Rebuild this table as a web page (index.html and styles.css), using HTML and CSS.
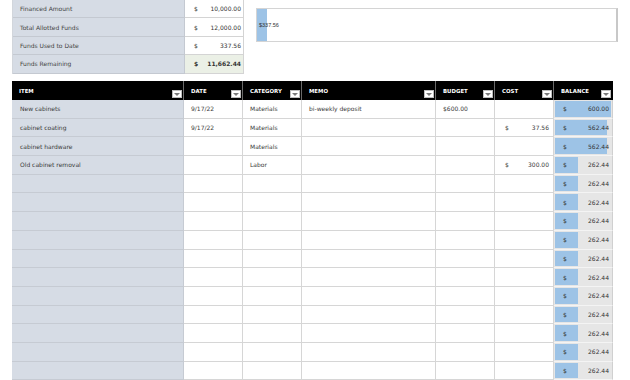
FILE: index.html
```html
<!DOCTYPE html>
<html>
<head>
<meta charset="utf-8">
<link rel="stylesheet" href="styles.css">
</head>
<body>
<div class="sheet">
  <div class="top">
    <div class="summary">
      <div class="lbl">Financed Amount</div><div class="val"><span>$</span><span>10,000.00</span></div>
      <div class="lbl">Total Allotted Funds</div><div class="val"><span>$</span><span>12,000.00</span></div>
      <div class="lbl">Funds Used to Date</div><div class="val"><span>$</span><span>337.56</span></div>
      <div class="lbl">Funds Remaining</div><div class="val rem"><span>$</span><span>11,662.44</span></div>
    </div>
    <div class="chart">
      <div class="chart-bar"></div>
      <span class="chart-label">$337.56</span>
    </div>
  </div>

  <div class="grid">
    <div class="th">ITEM<span class="flt"></span></div>
    <div class="th">DATE<span class="flt"></span></div>
    <div class="th">CATEGORY<span class="flt"></span></div>
    <div class="th">MEMO<span class="flt"></span></div>
    <div class="th">BUDGET<span class="flt"></span></div>
    <div class="th">COST<span class="flt"></span></div>
    <div class="th last">BALANCE<span class="flt"></span></div>

    <div class="c item">New cabinets</div><div class="c">9/17/22</div><div class="c">Materials</div><div class="c">bi-weekly deposit</div><div class="c">$600.00</div><div class="c"></div><div class="c bal" style="--w:100%"><span>$</span><span>600.00</span></div>
    <div class="c item">cabinet coating</div><div class="c">9/17/22</div><div class="c">Materials</div><div class="c"></div><div class="c"></div><div class="c cost"><span>$</span><span>37.56</span></div><div class="c bal" style="--w:93.7%"><span>$</span><span>562.44</span></div>
    <div class="c item">cabinet hardware</div><div class="c"></div><div class="c">Materials</div><div class="c"></div><div class="c"></div><div class="c"></div><div class="c bal" style="--w:93.7%"><span>$</span><span>562.44</span></div>
    <div class="c item">Old cabinet removal</div><div class="c"></div><div class="c">Labor</div><div class="c"></div><div class="c"></div><div class="c cost"><span>$</span><span>300.00</span></div><div class="c bal" style="--w:43.7%"><span>$</span><span>262.44</span></div>
    <div class="c item"></div><div class="c"></div><div class="c"></div><div class="c"></div><div class="c"></div><div class="c"></div><div class="c bal" style="--w:43.7%"><span>$</span><span>262.44</span></div>
    <div class="c item"></div><div class="c"></div><div class="c"></div><div class="c"></div><div class="c"></div><div class="c"></div><div class="c bal" style="--w:43.7%"><span>$</span><span>262.44</span></div>
    <div class="c item"></div><div class="c"></div><div class="c"></div><div class="c"></div><div class="c"></div><div class="c"></div><div class="c bal" style="--w:43.7%"><span>$</span><span>262.44</span></div>
    <div class="c item"></div><div class="c"></div><div class="c"></div><div class="c"></div><div class="c"></div><div class="c"></div><div class="c bal" style="--w:43.7%"><span>$</span><span>262.44</span></div>
    <div class="c item"></div><div class="c"></div><div class="c"></div><div class="c"></div><div class="c"></div><div class="c"></div><div class="c bal" style="--w:43.7%"><span>$</span><span>262.44</span></div>
    <div class="c item"></div><div class="c"></div><div class="c"></div><div class="c"></div><div class="c"></div><div class="c"></div><div class="c bal" style="--w:43.7%"><span>$</span><span>262.44</span></div>
    <div class="c item"></div><div class="c"></div><div class="c"></div><div class="c"></div><div class="c"></div><div class="c"></div><div class="c bal" style="--w:43.7%"><span>$</span><span>262.44</span></div>
    <div class="c item"></div><div class="c"></div><div class="c"></div><div class="c"></div><div class="c"></div><div class="c"></div><div class="c bal" style="--w:43.7%"><span>$</span><span>262.44</span></div>
    <div class="c item"></div><div class="c"></div><div class="c"></div><div class="c"></div><div class="c"></div><div class="c"></div><div class="c bal" style="--w:43.7%"><span>$</span><span>262.44</span></div>
    <div class="c item"></div><div class="c"></div><div class="c"></div><div class="c"></div><div class="c"></div><div class="c"></div><div class="c bal" style="--w:43.7%"><span>$</span><span>262.44</span></div>
    <div class="c item"></div><div class="c"></div><div class="c"></div><div class="c"></div><div class="c"></div><div class="c"></div><div class="c bal" style="--w:43.7%"><span>$</span><span>262.44</span></div>
  </div>
</div>
</body>
</html>
```

FILE: styles.css
```css
* { box-sizing: border-box; }
html, body { margin: 0; padding: 0; background: #fff; overflow: hidden; }
body {
  font-family: "DejaVu Sans", sans-serif;
  font-size: 6px;
  color: #3a3a3a;
  width: 630px;
  height: 380px;
}
.sheet { padding-left: 12px; }

.top { display: flex; align-items: flex-start; height: 81px; }
.summary {
  display: grid;
  grid-template-columns: 172px 59px;
  grid-auto-rows: 18.4px;
  border-left: 1px solid #d2d6dc;
}
.lbl {
  background: #d6dce5;
  border-bottom: 1px solid #c4c9d1;
  border-right: 1px solid #c4c9d1;
  display: flex; align-items: center;
  padding-left: 7px;
  color: #444;
}
.val {
  display: flex; align-items: center; justify-content: space-between;
  padding: 0 2px 0 9px;
  border-bottom: 1px solid #d4d4d4;
  border-right: 1px solid #d4d4d4;
  color: #333;
}
.val.rem { background: #ebf0e6; font-weight: bold; }

.chart {
  margin: 8px 0 0 12px;
  width: 362px;
  height: 34px;
  border: 1px solid #d4d4d4;
  border-right: 2px solid #c8c8c8;
  display: flex; align-items: center;
  position: relative;
}
.chart-bar { width: 10px; align-self: stretch; background: #9dc3e6; }
.chart-label {
  margin-left: -8px;
  font-family: "Liberation Sans", sans-serif;
  font-size: 5.5px;
  color: #333;
}

.grid {
  display: grid;
  grid-template-columns: 172px 59px 59px 134px 59px 59px 59px;
  grid-template-rows: 19px;
  grid-auto-rows: 18.7px;
}
.th {
  background: #000;
  color: #fff;
  font-weight: bold;
  font-size: 5.4px;
  display: flex; align-items: center; justify-content: space-between;
  padding: 0 1px 0 7px;
  border-right: 1px solid #6a6a6a;
}
.th.last { border-right: 1px solid #000; }
.flt {
  align-self: flex-end;
  margin-bottom: 2px;
  width: 10px; height: 8px;
  background: #fff;
  border: 1px solid #bdbdbd;
  display: flex; align-items: center; justify-content: center;
}
.flt::after {
  content: "";
  border-left: 3px solid transparent;
  border-right: 3px solid transparent;
  border-top: 3px solid #7a7a7a;
}
.c {
  border-right: 1px solid #d6d6d6;
  border-bottom: 1px solid #d6d6d6;
  display: flex; align-items: center;
  padding: 0 4px 0 7px;
  color: #3a3a3a;
  white-space: nowrap;
}
.c.item { background: #d6dce5; border-color: #c6cbd3; padding-left: 8px; }
.c.cost { justify-content: space-between; padding-left: 10px; }
.c.bal {
  justify-content: space-between;
  padding: 0 3px 0 9px;
  border-right: 1px solid #d0d0d0;
  border-bottom: 1px solid #f4f4f4;
  background: linear-gradient(#9dc3e6, #9dc3e6) no-repeat 1px 1px / calc(var(--w) - 2px) calc(100% - 2px), #e6e6e6;
  color: #333;
}
```
